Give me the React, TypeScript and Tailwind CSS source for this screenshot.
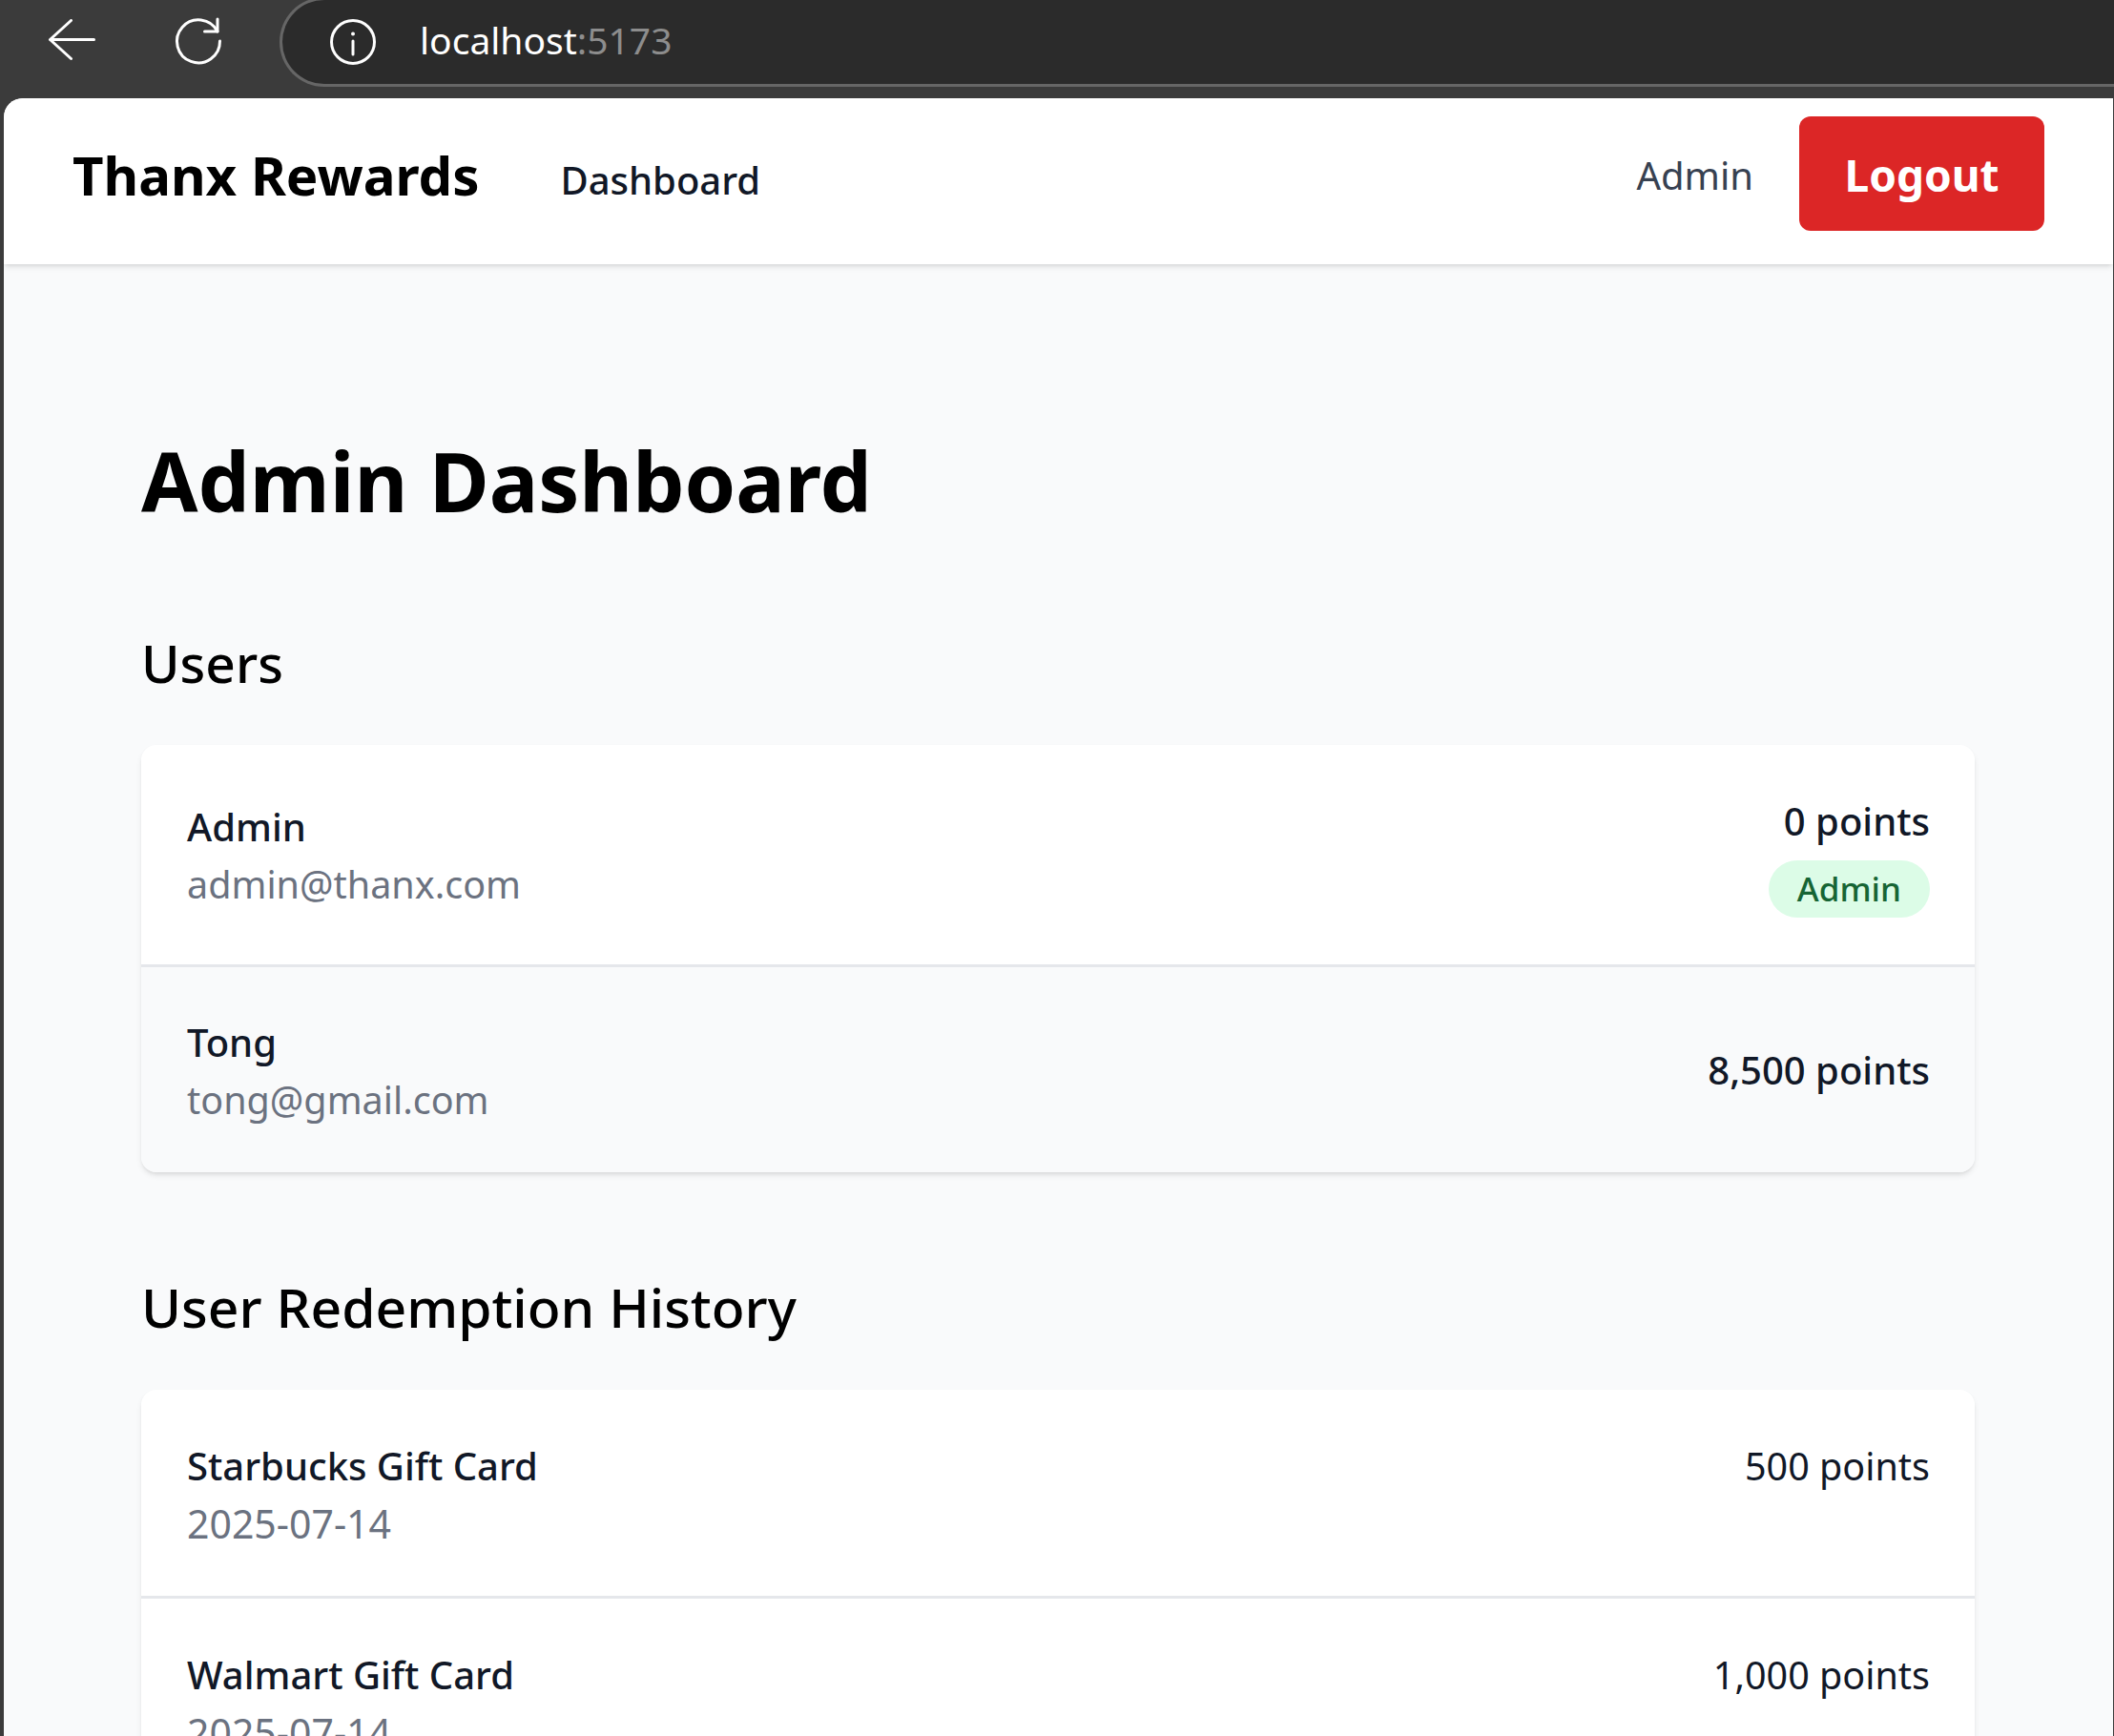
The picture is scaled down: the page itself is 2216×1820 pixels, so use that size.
const font = { fontFamily: '"Noto Sans", "Open Sans", sans-serif' }

function BrowserBar() {
  return (
    <div className="flex h-[103px] items-start overflow-hidden bg-[#3b3b3b]">
      <div className="flex h-[84px] w-[293px] shrink-0 items-center gap-[84px] pl-[50px]">
        <svg width="50" height="44" viewBox="0 0 50 44" fill="none" stroke="white" strokeWidth="3" strokeLinecap="round" strokeLinejoin="round">
          <path d="M48.500 21.500H2.500M24.500 1.500 2.500 21.500l22 20" />
        </svg>
        <svg width="48" height="48" viewBox="0 0 48 48" fill="none" stroke="white" strokeWidth="3" strokeLinecap="round" strokeLinejoin="round" className="overflow-visible">
          <path d="M44 15A22.500 22.500 0 1 0 46.500 25" />
          <path d="M44 2V15H30.500" />
        </svg>
      </div>
      <div className="-mt-[3px] flex h-[94px] flex-1 items-center rounded-l-[47px] border-[3px] border-r-0 border-[#666666] bg-[#2b2b2b] pl-[50px]">
        <svg width="48" height="48" viewBox="0 0 48 48" fill="none" stroke="white" strokeWidth="3" strokeLinecap="round">
          <circle cx="24" cy="24" r="22.500" />
          <path d="M24 23v14" />
          <circle cx="24" cy="15.500" r="2" fill="white" stroke="none" />
        </svg>
        <span className="mb-[3px] ml-[46px] text-[39px] text-white">
          localhost<span className="text-[#8d8d8d]">:5173</span>
        </span>
      </div>
    </div>
  )
}

function UserRow({ name, email, points, badge, shaded }: { name: string; email: string; points: string; badge?: boolean; shaded?: boolean }) {
  return (
    <div className={`flex items-center justify-between pl-[48px] pr-[47px] ${shaded ? 'h-[215px] bg-[#f9fafb]' : 'h-[233px] border-b-[3px] border-[#e5e7eb] bg-white'}`}>
      <div className="mt-[2px]">
        <div className="text-[40px] leading-[60px] font-medium text-[#111827]">{name}</div>
        <div className="text-[39.500px] leading-[60px] text-[#6b7280]">{email}</div>
      </div>
      <div className="flex flex-col items-end">
        <div className="text-[40px] leading-[60px] font-medium text-[#111827]">{points}</div>
        {badge && (
          <span className="mt-[11px] rounded-full bg-[#dcfce7] px-[30px] text-[35px] leading-[60px] font-medium text-[#166534]">Admin</span>
        )}
      </div>
    </div>
  )
}

function RedemptionRow({ title, date, points, last }: { title: string; date: string; points: string; last?: boolean }) {
  return (
    <div className={`flex items-start justify-between bg-white pl-[48px] pr-[47px] pt-[50px] ${last ? 'h-[200px]' : 'h-[219px] border-b-[3px] border-[#e5e7eb]'}`}>
      <div>
        <div className="text-[40px] leading-[60px] font-medium text-[#111827]">{title}</div>
        <div className="text-[41px] leading-[60px] text-[#6b7280]">{date}</div>
      </div>
      <div className="text-[39.500px] leading-[60px] text-[#111827]">{points}</div>
    </div>
  )
}

export default function App() {
  return (
    <div className="h-[1820px] w-[2216px] overflow-hidden bg-[#3b3b3b]" style={font}>
      <BrowserBar />
      <div className="ml-[4px] mr-[1px] h-[1717px] overflow-hidden rounded-tl-[20px] bg-[#f9fafb]">
        <header className="flex h-[174px] items-center justify-between bg-white px-[72px] shadow-md">
          <div className="flex items-center">
            <span className="mb-[12px] text-[56.400px] font-bold text-black">Thanx Rewards</span>
            <span className="mb-[2px] ml-[85px] text-[40px] font-medium text-[#111827]">Dashboard</span>
          </div>
          <div className="flex items-center gap-[48px] pb-[16px]">
            <span className="mt-[4px] text-[40px] text-[#374151]">Admin</span>
            <button className="h-[120px] w-[257px] rounded-[12px] bg-[#dc2626] pt-[3px] text-[46px] font-bold text-white">Logout</button>
          </div>
        </header>
        <main className="pl-[144px] pr-[145px] pt-[167px]">
          <h1 className="text-[86px] leading-[120px] font-bold text-black">Admin Dashboard</h1>
          <h2 className="mt-[89px] text-[55px] leading-[84px] font-medium text-black">Users</h2>
          <div className="mt-[44px] overflow-hidden rounded-[16px] shadow-md">
            <UserRow name="Admin" email="admin@thanx.com" points="0 points" badge />
            <UserRow name="Tong" email="tong@gmail.com" points="8,500 points" shaded />
          </div>
          <h2 className="mt-[100px] text-[57px] leading-[82px] font-medium text-black">User Redemption History</h2>
          <div className="mt-[46px] overflow-hidden rounded-[16px] shadow-md">
            <RedemptionRow title="Starbucks Gift Card" date="2025-07-14" points="500 points" />
            <RedemptionRow title="Walmart Gift Card" date="2025-07-14" points="1,000 points" last />
          </div>
        </main>
      </div>
    </div>
  )
}
